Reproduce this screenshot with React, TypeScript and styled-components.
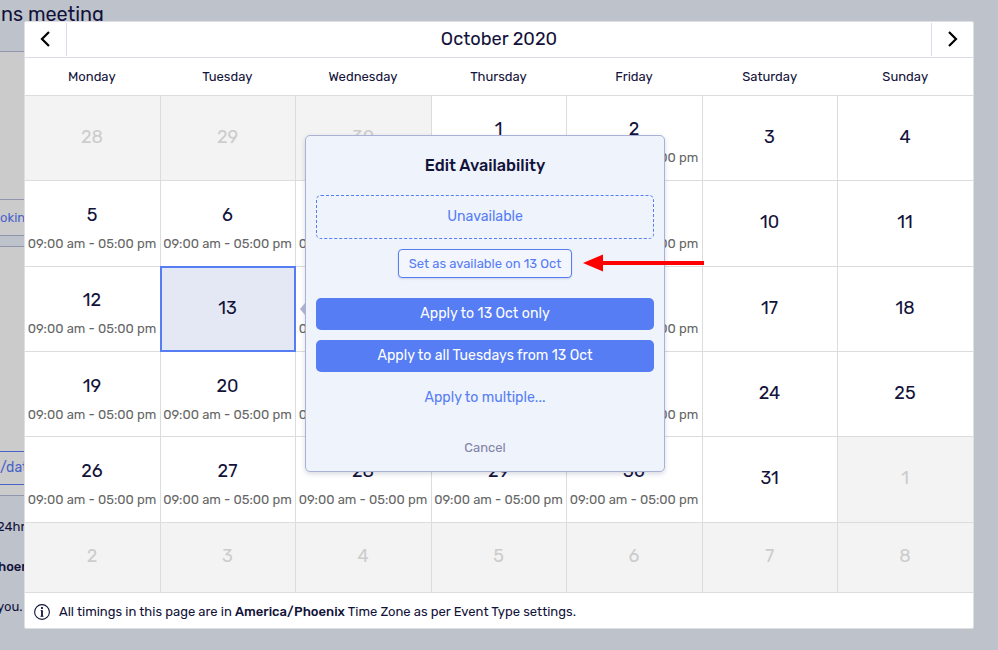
import React from "react";
import styled, { createGlobalStyle, css } from "styled-components";

const GlobalStyle = createGlobalStyle`
  *, *::before, *::after { box-sizing: border-box; }
  body { margin: 0; }
  button { font: inherit; cursor: pointer; margin: 0; }
`;

const Page = styled.div`
  position: relative;
  width: 998px;
  height: 650px;
  overflow: hidden;
  background: #bec2cb;
  color: #12123a;
  font-family: Rubik, Roboto, sans-serif;
  font-size: 13px;
  white-space: nowrap;
`;

const Backdrop = styled.div`
  display: flex;
  flex-direction: column;
  width: 24px;
`;

const BackTitle = styled.div`
  height: 51px;
  padding: 2px 0 0 1px;
  line-height: 25px;
  font-size: 19.8px;
`;

const BackBlock = styled.div<{ $height: number; $line?: string; $fill?: string }>`
  flex: none;
  display: flex;
  align-items: center;
  height: ${(p) => p.$height}px;
  overflow: hidden;
  border-top: 1px solid ${(p) => p.$line ?? "#9195ad"};
  background: ${(p) => p.$fill ?? "#cbcbcb"};
  color: #4a63c8;
`;

const BackLink = styled.span<{ $large?: boolean }>`
  padding-bottom: ${(p) => (p.$large ? 2 : 0)}px;
  font-size: ${(p) => (p.$large ? 14 : 13)}px;
`;

const BackNotes = styled.div`
  flex: none;
  height: 155px;
  overflow: hidden;
  border-top: 1px solid #9195ad;
  padding-top: 11px;
`;

const BackNote = styled.div<{ $bold?: boolean }>`
  height: 40px;
  line-height: 40px;
  margin-left: ${(p) => (p.$bold ? -2 : -3)}px;
  font-weight: ${(p) => (p.$bold ? 500 : 400)};
`;

const Modal = styled.section`
  position: absolute;
  left: 24px;
  top: 21px;
  width: 950px;
  height: 608px;
  border: 1px solid #dfdfe3;
  border-radius: 2px;
  background: #fff;
`;

const MonthBar = styled.header`
  display: flex;
  align-items: center;
  height: 36px;
  border-bottom: 1px solid #dcdce9;
`;

const MonthName = styled.h1`
  flex: 1;
  margin: 0;
  text-align: center;
  font-size: 18.2px;
  font-weight: 400;
  line-height: 32px;
  padding-bottom: 2px;
`;

const NavButton = styled.button<{ $side: "left" | "right" }>`
  display: flex;
  align-items: center;
  justify-content: center;
  width: 42px;
  height: 33px;
  padding: 0 0 1px;
  border: 0;
  background: none;
  color: #000;
  ${(p) =>
    p.$side === "left"
      ? css`border-right: 1px solid #dcdce9; padding-right: 1px;`
      : css`border-left: 1px solid #dcdce9;`}
`;

const WeekRow = styled.div`
  display: grid;
  grid-template-columns: repeat(7, 1fr);
  margin: 0 -1px;
  padding: 0 1px 0 0;
  height: 38px;
  line-height: 37px;
  text-align: center;
`;

const MonthGrid = styled.div`
  display: grid;
  grid-template-columns: 136px 135px 136px 135px 136px 135px 135px;
  grid-template-rows: 85px 86px 85px 85px 86px 70px;
  margin-top: -1px;
  border-top: 1px solid #dcdcdc;
`;

type CellKind = "open" | "empty" | "outside" | "selected";

const Cell = styled.div<{ $kind: CellKind; $last: boolean; $row: number }>`
  display: flex;
  flex-direction: column;
  align-items: center;
  min-width: 0;
  border-bottom: 1px solid #dcdcdc;
  border-right: ${(p) => (p.$last ? "0" : "1px solid #dcdcdc")};
  padding-right: 1px;
  padding-top: ${(p) => (p.$kind === "open" ? (p.$row === 0 || p.$row === 2 ? 21 : 22) : p.$row === 5 ? 21 : 29)}px;
  background: ${(p) => (p.$kind === "outside" ? "#f3f3f3" : "#fff")};
  color: ${(p) => (p.$kind === "outside" ? "#cccccc" : "#12123a")};
  ${(p) =>
    p.$kind === "selected" &&
    css`
      margin: -1px 0 0 -1px;
      padding-top: 28px;
      border: 2px solid #567df4;
      background: #e4e8f5;
    `}
`;

const DayNumber = styled.span`
  line-height: 24px;
  font-size: 18px;
`;

const Hours = styled.span`
  margin-top: 8px;
  line-height: 18px;
  color: #666;
`;

const Footer = styled.footer`
  display: flex;
  align-items: center;
  height: 36px;
  padding: 1px 0 0 9px;
  gap: 9px;

  b { font-weight: 500; }
`;

const Popover = styled.div`
  position: absolute;
  left: 305px;
  top: 135px;
  display: flex;
  flex-direction: column;
  align-items: center;
  width: 360px;
  height: 337px;
  padding: 0 10px;
  border: 1px solid #a9b2d6;
  border-radius: 5px;
  background: #eef3fc;
  box-shadow: 0 2px 5px rgba(40, 50, 90, 0.18);

  &::before {
    content: "";
    position: absolute;
    left: -6px;
    top: 167px;
    border: 6px solid transparent;
    border-left: 0;
    border-right: 5px solid #abb0cf;
  }
`;

const PopoverTitle = styled.h2`
  margin: 19px 0 0;
  line-height: 22px;
  font-size: 16.25px;
  font-weight: 500;
`;

const StatusBox = styled.div`
  width: 100%;
  height: 44px;
  margin-top: 18px;
  border: 1px dashed #567df4;
  border-radius: 5px;
  line-height: 42px;
  text-align: center;
  font-size: 14.1px;
  color: #567df4;
`;

const OutlineButton = styled.button`
  width: 174px;
  height: 29px;
  margin: 10px 0;
  padding: 0;
  border: 1px solid #567df4;
  border-radius: 4px;
  background: #f3f6fd;
  box-shadow: 0 1px 2px rgba(40, 50, 90, 0.15);
  font-size: 13px;
  color: #567df4;
`;

const SolidButton = styled.button`
  width: 100%;
  height: 32px;
  margin-top: 10px;
  padding: 0 0 2px;
  border: 0;
  border-radius: 5px;
  background: #567df4;
  font-size: 14.1px;
  color: #fff;
`;

const TextButton = styled.button<{ $muted?: boolean }>`
  height: 24px;
  margin-top: ${(p) => (p.$muted ? 26 : 13)}px;
  padding: 0;
  border: 0;
  background: none;
  font-size: ${(p) => (p.$muted ? 13 : 14.1)}px;
  color: ${(p) => (p.$muted ? "#8184a5" : "#567df4")};
`;

const Pointer = styled.svg`
  position: absolute;
  left: 583px;
  top: 253px;
`;

const Chevron = ({ d }: { d: string }) => (
  <svg width="12" height="18" viewBox="0 0 12 18" fill="none" stroke="currentColor" strokeWidth="2.2">
    <path d={d} />
  </svg>
);

const InfoIcon = () => (
  <svg width="16" height="16" viewBox="0 0 16 16" fill="none" stroke="#12123a">
    <circle cx="8" cy="8" r="7.4" strokeWidth="1.1" />
    <path d="M8 6.2V12.5" strokeWidth="1.8" />
    <path d="M6.6 6.6H8M6.4 12.3H9.6" strokeWidth="0.8" />
    <path d="M8 3.1V5" strokeWidth="1.8" />
  </svg>
);

const WEEKDAYS = ["Monday", "Tuesday", "Wednesday", "Thursday", "Friday", "Saturday", "Sunday"];

const DAYS = Array.from({ length: 42 }, (_, index) => {
  const offset = index - 2;
  const column = index % 7;
  let kind: CellKind = column > 4 ? "empty" : "open";
  let day = offset;
  if (offset < 1) {
    day = offset + 30;
    kind = "outside";
  } else if (offset > 31) {
    day = offset - 31;
    kind = "outside";
  } else if (offset === 13) {
    kind = "selected";
  }
  return { index, day, kind, last: column === 6, row: Math.floor(index / 7) };
});

export default function App() {
  return (
    <>
      <GlobalStyle />
      <Page>
        <Backdrop>
          <BackTitle>ns meeting</BackTitle>
          <BackBlock $height={148} />
          <BackBlock $height={36}>
            <BackLink>okin</BackLink>
          </BackBlock>
          <BackBlock $height={11} $fill="#bec2cb" />
          <BackBlock $height={205} />
          <BackBlock $height={33} $line="#4a63c8">
            <BackLink $large>/dat</BackLink>
          </BackBlock>
          <BackBlock $height={11} $line="#4a63c8" />
          <BackNotes>
            <BackNote>24hr</BackNote>
            <BackNote $bold>hoen</BackNote>
            <BackNote>you.</BackNote>
          </BackNotes>
        </Backdrop>

        <Modal>
          <MonthBar>
            <NavButton $side="left" aria-label="Previous month">
              <Chevron d="M10 2L3 9L10 16" />
            </NavButton>
            <MonthName>October 2020</MonthName>
            <NavButton $side="right" aria-label="Next month">
              <Chevron d="M2 2L9 9L2 16" />
            </NavButton>
          </MonthBar>
          <WeekRow>
            {WEEKDAYS.map((name) => (
              <span key={name}>{name}</span>
            ))}
          </WeekRow>
          <MonthGrid>
            {DAYS.map(({ index, day, kind, last, row }) => (
              <Cell key={index} $kind={kind} $last={last} $row={row}>
                <DayNumber>{day}</DayNumber>
                {kind === "open" && <Hours>09:00 am - 05:00 pm</Hours>}
              </Cell>
            ))}
          </MonthGrid>
          <Footer>
            <InfoIcon />
            <span>
              All timings in this page are in <b>America/Phoenix</b> Time Zone as per Event Type settings.
            </span>
          </Footer>
        </Modal>

        <Popover role="dialog">
          <PopoverTitle>Edit Availability</PopoverTitle>
          <StatusBox>Unavailable</StatusBox>
          <OutlineButton>Set as available on 13 Oct</OutlineButton>
          <SolidButton>Apply to 13 Oct only</SolidButton>
          <SolidButton>Apply to all Tuesdays from 13 Oct</SolidButton>
          <TextButton>Apply to multiple...</TextButton>
          <TextButton $muted>Cancel</TextButton>
        </Popover>

        <Pointer width="122" height="20" viewBox="0 0 122 20">
          <path d="M0 10L20 1.5V18.5Z" fill="#fe0000" />
          <path d="M18 10H121" stroke="#fe0000" strokeWidth="4" />
        </Pointer>
      </Page>
    </>
  );
}
